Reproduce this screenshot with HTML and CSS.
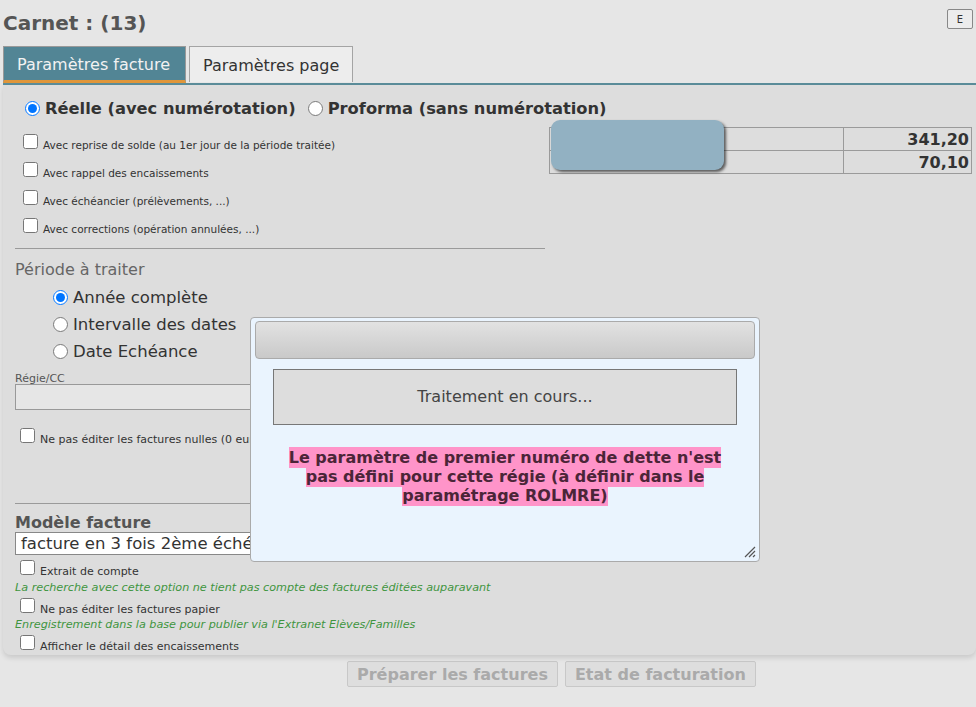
FILE: index.html
```html
<!DOCTYPE html>
<html lang="fr">
<head>
    <meta charset="UTF-8">
    <title>Carnet</title>
    <link rel="stylesheet" href="styles.css">
</head>
<body>
    <div class="page-head">
        <h1>Carnet : (13)</h1>
        <button type="button" class="btn-e">E</button>
    </div>

    <div class="tabs">
        <div class="tab tab-active">Paramètres facture</div>
        <div class="tab">Paramètres page</div>
    </div>

    <div class="panel">
        <div class="type-row">
            <label><input type="radio" name="type" checked>Réelle (avec numérotation)</label>
            <label><input type="radio" name="type">Proforma (sans numérotation)</label>
        </div>

        <div class="top-area">
            <div class="left-col">
                <div class="opt"><input type="checkbox">Avec reprise de solde (au 1er jour de la période traitée)</div>
                <div class="opt"><input type="checkbox">Avec rappel des encaissements</div>
                <div class="opt"><input type="checkbox">Avec échéancier (prélèvements, ...)</div>
                <div class="opt"><input type="checkbox">Avec corrections (opération annulées, ...)</div>

                <hr class="sep">

                <div class="section-title">Période à traiter</div>
                <div class="periods">
                    <label><input type="radio" name="periode" checked>Année complète</label>
                    <label><input type="radio" name="periode">Intervalle des dates</label>
                    <label><input type="radio" name="periode">Date Echéance</label>
                </div>

                <div class="small-label">Régie/CC</div>
                <div class="text-input"></div>

                <div class="opt2 nulles"><input type="checkbox">Ne pas éditer les factures nulles (0 euro)</div>

                <hr class="sep sep2">

                <div class="model-title">Modèle facture</div>
                <div class="select-box">facture en 3 fois 2ème échéance</div>

                <div class="opt2"><input type="checkbox">Extrait de compte</div>
                <div class="hint">La recherche avec cette option ne tient pas compte des factures éditées auparavant</div>
                <div class="opt2"><input type="checkbox">Ne pas éditer les factures papier</div>
                <div class="hint hint-last">Enregistrement dans la base pour publier via l'Extranet Elèves/Familles</div>
                <div class="opt2"><input type="checkbox">Afficher le détail des encaissements</div>
            </div>

            <table class="totals">
                <tr><td>Total facturé</td><td class="num">341,20</td></tr>
                <tr><td>Total encaissé</td><td class="num">70,10</td></tr>
            </table>
        </div>

        <div class="mask"></div>
    </div>

    <div class="actions">
        <button type="button" class="btn" disabled>Préparer les factures</button>
        <button type="button" class="btn" disabled>Etat de facturation</button>
    </div>

    <div class="dialog">
        <div class="dialog-bar"></div>
        <div class="dialog-status">Traitement en cours...</div>
        <p class="dialog-msg"><span>Le paramètre de premier numéro de dette n'est pas défini pour cette régie (à définir dans le paramétrage ROLMRE)</span></p>
        <svg class="grip" width="12" height="12" viewBox="0 0 12 12">
            <path d="M11 1 L1 11 M11 5 L5 11 M11 9 L9 11" stroke="#555" stroke-width="1.2"/>
        </svg>
    </div>
</body>
</html>
```

FILE: styles.css
```css
body {
    margin: 0;
    background: #e6e6e6;
    font-family: "DejaVu Sans", Verdana, sans-serif;
    color: #333;
    position: relative;
    width: 976px;
    height: 707px;
    overflow: hidden;
}
.page-head {
    display: flex;
    justify-content: space-between;
    align-items: center;
    padding: 8px 3px 0 3px;
    height: 30px;
}
h1 {
    margin: 0;
    font-size: 20px;
    font-weight: bold;
    color: #555;
}
.btn-e {
    font-family: inherit;
    font-size: 10px;
    width: 26px;
    height: 20px;
    padding: 0;
    background: #ececec;
    border: 1px solid #888;
    border-radius: 2px;
    color: #333;
    margin-top: -8px;
}
.tabs {
    display: flex;
    gap: 3px;
    margin: 8px 0 0 3px;
    border-bottom: 2px solid #5b8d9a;
}
.tab {
    height: 35px;
    line-height: 37px;
    padding: 0 13px;
    font-size: 16px;
    border: 1px solid #a4a4a4;
    border-bottom: none;
    background: #ededed;
    color: #333;
}
.tab-active {
    background: #528595;
    color: #f2f2f2;
    border-color: #999;
    border-bottom: 3px solid #e0963a;
    height: 33px;
    line-height: 35px;
    padding: 0 15px 0 13px;
}
.panel {
    position: relative;
    background: #dddddd;
    margin-left: 3px;
    border-radius: 0 0 8px 8px;
    box-shadow: 0 3px 5px rgba(0,0,0,0.12);
    padding: 12px 0 1px 12px;
}
.type-row {
    display: flex;
    gap: 12px;
    font-size: 16.3px;
    font-weight: bold;
    padding-left: 10px;
    height: 22px;
    align-items: center;
}
.type-row label, .periods label {
    display: flex;
    align-items: center;
}
.type-row input, .periods input {
    width: 15px;
    height: 15px;
    margin: 0 5px 0 0;
}
.top-area {
    display: flex;
    align-items: flex-start;
}
.left-col {
    width: 530px;
}
.opt {
    height: 28px;
    line-height: 28px;
    font-size: 10.5px;
    padding-left: 8px;
}
.opt:first-child {
    margin-top: 12px;
}
.opt input, .opt2 input {
    width: 15px;
    height: 15px;
    margin: 0 5px 0 0;
    vertical-align: baseline;
}
.sep {
    border: none;
    border-top: 1px solid #9a9a9a;
    margin: 5px 0 10px 0;
}
.section-title {
    font-size: 16px;
    color: #666;
    line-height: 22px;
}
.periods {
    padding-left: 38px;
    font-size: 16.5px;
    color: #333;
    margin-top: 3px;
}
.periods label {
    height: 27px;
}
.small-label {
    font-size: 11px;
    color: #555;
    margin-top: 9px;
    line-height: 10px;
}
.text-input {
    height: 24px;
    border: 1px solid #999;
    background: #e6e6e6;
    width: 528px;
}
.opt2 {
    font-size: 11px;
    line-height: 15px;
    padding-left: 5px;
    margin-top: 3px;
}
.nulles {
    margin-top: 18px;
}
.sep2 {
    margin: 56px 0 10px 0;
}
.model-title {
    font-size: 16px;
    font-weight: bold;
    color: #555;
    line-height: 18px;
}
.select-box {
    height: 21px;
    line-height: 21px;
    border: 1px solid #888;
    background: #fff;
    font-size: 16.5px;
    padding-left: 5px;
    width: 523px;
    overflow: hidden;
    white-space: nowrap;
    margin-bottom: 5px;
}
.hint {
    font-size: 11.2px;
    font-style: italic;
    color: #3f953f;
    line-height: 15px;
    margin-top: 1px;
}
.hint-last {
    margin-top: 0;
}
.totals {
    border-collapse: collapse;
    margin: 8px 4px 0 4px;
    flex: 1;
    font-size: 16px;
}
.totals td {
    border: 1px solid #9a9a9a;
    height: 22px;
    padding: 0 2px;
    color: transparent;
}
.totals td.num {
    width: 123px;
    text-align: right;
    font-weight: bold;
    color: #333;
}
.mask {
    position: absolute;
    left: 548px;
    top: 35px;
    width: 173px;
    height: 50px;
    background: #92b1c2;
    border-radius: 9px;
    box-shadow: 2px 2px 3px rgba(0,0,0,0.6);
}
.actions {
    display: flex;
    gap: 7px;
    margin-top: 6px;
    padding-left: 347px;
}
.btn {
    font-family: inherit;
    font-size: 16px;
    font-weight: bold;
    color: #aaa;
    background: #dedede;
    border: 1px solid #c8c8c8;
    border-radius: 2px;
    height: 26px;
    padding: 0 9px;
}
.dialog {
    position: absolute;
    left: 250px;
    top: 317px;
    width: 500px;
    height: 236px;
    background: #eaf4fe;
    border: 1px solid #aaa;
    border-radius: 4px;
    padding: 3px 4px 4px 4px;
}
.dialog-bar {
    height: 36px;
    border: 1px solid #aaa;
    border-radius: 4px;
    background: linear-gradient(#e2e2e2, #c9c9c9);
}
.dialog-status {
    margin: 10px 18px 0 18px;
    height: 54px;
    line-height: 54px;
    border: 1px solid #777;
    background: #dddddd;
    text-align: center;
    font-size: 16px;
    color: #444;
}
.dialog-msg {
    margin: 23px 20px 0 20px;
    text-align: center;
    font-size: 16px;
    font-weight: bold;
    line-height: 19px;
    color: #4b2538;
}
.dialog-msg span {
    background: #ff94c9;
    padding: 1px 0;
}
.grip {
    position: absolute;
    right: 3px;
    bottom: 3px;
}
```
